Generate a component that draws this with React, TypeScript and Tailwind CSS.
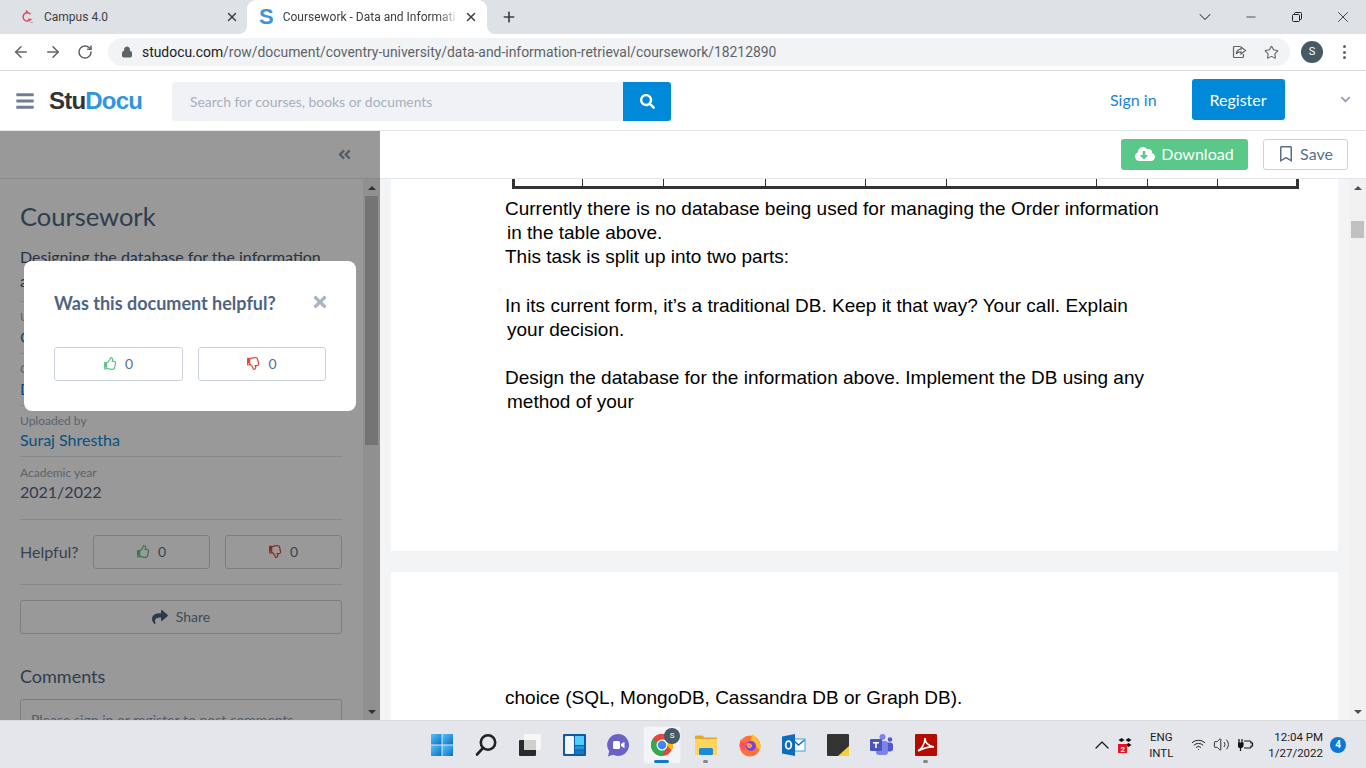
import React from "react";
import {
  FaBars, FaSearch, FaTimes, FaAngleDoubleLeft, FaChevronDown, FaCloudDownloadAlt, FaRegBookmark,
  FaRegThumbsUp, FaRegThumbsDown, FaShare,
} from "react-icons/fa";
import { ArrowLeft, ArrowRight, RotateCw, Lock, Star, X, Plus, ChevronDown, Minus, ChevronUp, Wifi, Volume2 } from "lucide-react";

const lato = "font-['Lato','Open_Sans',sans-serif]";

function Divider() {
  return <div className="h-px bg-[#dfe3e8]" />;
}

function Vote({ className, iconSize = 13 }: { className: string; iconSize?: number }) {
  return (
    <div className={`flex h-[34px] items-center justify-center gap-[8px] rounded-[3px] border border-[#ccd2da] bg-white pb-px text-[14px] text-[#5b6f88] ${className}`}>
      <FaRegThumbsUp size={iconSize} className="text-[#5ac888]" />
      <span>0</span>
    </div>
  );
}

function VoteDown({ className, iconSize = 13 }: { className: string; iconSize?: number }) {
  return (
    <div className={`flex h-[34px] items-center justify-center gap-[8px] rounded-[3px] border border-[#ccd2da] bg-white pb-px text-[14px] text-[#5b6f88] ${className}`}>
      <FaRegThumbsDown size={iconSize} className="text-[#e2493b]" />
      <span>0</span>
    </div>
  );
}

function Sidebar() {
  return (
    <aside className={`relative flex h-full w-[380px] shrink-0 flex-col bg-white ${lato}`}>
      <div className="flex h-[48px] shrink-0 items-center justify-end border-b border-[#e3e6ea] pr-[28px]">
        <FaAngleDoubleLeft size={15} className="text-[#8e9bb0]" />
      </div>
      <div className="flex min-h-0 flex-1">
        <div className="min-h-0 w-[363px] overflow-hidden pl-5 pr-[21px] pt-[21px] text-[#3f5571]">
          <div className="text-[25.5px] leading-[32px] text-[#51667f]">Coursework</div>
          <div className="mt-[13px] text-[16px] leading-[24px]">Designing the database for the information and more</div>
          <div className="mt-[8px]"><Divider /></div>
          <div className="mt-[7px] text-[12px] leading-[16px] text-[#9aa5b4]">University</div>
          <div className="mt-[2px] text-[16px] leading-[20px] text-[#0f85d4]">Coventry University</div>
          <div className="mt-[6px]"><Divider /></div>
          <div className="mt-[7px] text-[12px] leading-[16px] text-[#9aa5b4]">Course</div>
          <div className="mt-[2px] text-[16px] leading-[20px] text-[#0f85d4]">Data and Information</div>
          <div className="mt-[6px]"><Divider /></div>
          <div className="mt-[7px] text-[12px] leading-[16px] text-[#9aa5b4]">Uploaded by</div>
          <div className="text-[16px] leading-[21px] text-[#0f85d4]">Suraj Shrestha</div>
          <div className="mt-[6px]"><Divider /></div>
          <div className="mt-[8px] text-[12px] leading-[16px] text-[#9aa5b4]">Academic year</div>
          <div className="text-[16px] leading-[22px] text-[#51667f]">2021/2022</div>
          <div className="mt-[16px]"><Divider /></div>
          <div className="mt-[15px] flex items-center">
            <span className="w-[73px] text-[16px] text-[#5b6f88]">Helpful?</span>
            <Vote className="w-[117px]" />
            <VoteDown className="ml-[15px] w-[117px]" />
          </div>
          <div className="mt-[15px]"><Divider /></div>
          <div className="mt-[15px] flex h-[34px] items-center justify-center gap-[8px] rounded-[3px] border border-[#ccd2da] pb-px text-[14px] text-[#6b7d94]">
            <FaShare size={16} className="text-[#4a607c]" />
            <span>Share</span>
          </div>
          <div className="mt-[30px] text-[18px] leading-[24px] text-[#51667f]">Comments</div>
          <div className="mt-[11px] h-[60px] rounded-[3px] border border-[#ccd2da] px-[10px] pt-[11px] text-[14px] leading-[18px] text-[#8e9bb0]">
            Please sign in or register to post comments.
          </div>
        </div>
        <div className="flex w-[17px] shrink-0 flex-col items-center bg-[#f1f1f1]">
          <div className="flex h-[17px] w-full items-center justify-center"><div className="h-0 w-0 border-x-[4px] border-b-[4px] border-x-transparent border-b-[#505050]" /></div>
          <div className="h-[249px] w-[13px] bg-[#c1c1c1]" />
          <div className="flex-1" />
          <div className="flex h-[17px] w-full items-center justify-center"><div className="h-0 w-0 border-x-[4px] border-t-[4px] border-x-transparent border-t-[#505050]" /></div>
        </div>
      </div>
      <div className="absolute inset-0 bg-black/40" />
      <div className="absolute left-[24px] top-[130px] h-[150px] w-[332px] rounded-lg bg-white px-[30px] pt-[29px]">
        <div className="flex items-center justify-between">
          <span className="text-[18px] font-bold leading-[26px] text-[#4e6582]">Was this document helpful?</span>
          <FaTimes size={18} className="mb-[2px] mr-[-3px] text-[#a9b3c0]" />
        </div>
        <div className="mt-[31px] flex gap-[15px]">
          <Vote className="w-[129px]" />
          <VoteDown className="w-[128px]" />
        </div>
      </div>
    </aside>
  );
}

const lines = [
  ["ml-[0px]", "Currently there is no database being used for managing the Order information"],
  ["ml-[2px]", "in the table above."],
  ["ml-[0px]", "This task is split up into two parts:"],
  ["ml-[0px]", "\u00a0"],
  ["ml-[0px]", "In its current form, it\u2019s a traditional DB. Keep it that way? Your call. Explain"],
  ["ml-[2px]", "your decision."],
  ["ml-[0px]", "\u00a0"],
  ["ml-[0px]", "Design the database for the information above. Implement the DB using any"],
  ["ml-[2px]", "method of your"],
];

const cols = [68, 81, 102, 100, 81, 150, 51, 70, 78];

function DocArea() {
  return (
    <section className="flex min-w-0 flex-1 flex-col bg-[#f3f4f6]">
      <div className={`flex h-[48px] shrink-0 items-start justify-end gap-[15px] border-b border-[#e3e6ea] bg-white pr-[18px] pt-[8px] ${lato}`}>
        <div className="flex h-[31px] w-[127px] items-center justify-center gap-[6px] rounded-[3px] bg-[#5ac888] pb-[2px] text-[16px] text-white">
          <FaCloudDownloadAlt size={20} />
          <span>Download</span>
        </div>
        <div className="flex h-[31px] w-[85px] items-center justify-center gap-[6px] rounded-[3px] border border-[#ccd2da] pb-[2px] text-[16px] text-[#5b6f88]">
          <FaRegBookmark size={16} />
          <span>Save</span>
        </div>
      </div>
      <div className="flex min-h-0 flex-1">
        <div className="min-w-0 flex-1 overflow-hidden px-[11px]">
          <div className="h-[372px] bg-white pl-[114px]">
            <div className="ml-[7px] flex h-[10px] w-[787px] border-x-[3px] border-b-[3px] border-[#333]">
              {cols.map((w, i) => (
                <div key={i} style={{ width: w }} className="h-full shrink-0 border-r border-[#333] last:border-r-0" />
              ))}
            </div>
            <div className="mt-[8px] font-['Liberation_Sans',Arial,sans-serif] text-[19px] leading-[24.15px] text-black">
              {lines.map(([m, t], i) => (
                <div key={i} className={m}>{t}</div>
              ))}
            </div>
          </div>
          <div className="mt-[21px] h-[200px] bg-white pl-[114px] pt-[114px] font-['Liberation_Sans',Arial,sans-serif] text-[19px] leading-[24px] text-black">
            choice (SQL, MongoDB, Cassandra DB or Graph DB).
          </div>
        </div>
        <div className="flex w-[17px] shrink-0 flex-col items-center bg-[#f1f1f1]">
          <div className="flex h-[17px] w-full items-center justify-center"><div className="h-0 w-0 border-x-[4px] border-b-[4px] border-x-transparent border-b-[#505050]" /></div>
          <div className="mt-[25px] h-[17px] w-[13px] bg-[#c1c1c1]" />
          <div className="flex-1" />
          <div className="flex h-[17px] w-full items-center justify-center"><div className="h-0 w-0 border-x-[4px] border-t-[4px] border-x-transparent border-t-[#505050]" /></div>
        </div>
      </div>
    </section>
  );
}

function ChromeBars() {
  return (
    <div className="shrink-0 font-['Roboto','Open_Sans',sans-serif]">
      <div className="flex h-[34px] items-center bg-[#dee1e6] text-[12px] text-[#3c4043]">
        <div className="flex h-full w-[247px] shrink-0 items-center pl-[21px]">
          <svg width="14" height="16" viewBox="0 0 14 16" fill="none">
            <path d="M9.500 5.200A4.200 4.200 0 1 0 9.600 10.500L7 10.200" stroke="#e04a5f" strokeWidth="1.500" />
            <path d="M5 1.500 7 4" stroke="#e04a5f" strokeWidth="1.500" />
            <path d="M9 13.500h3" stroke="#9bb3c0" strokeWidth="1" />
          </svg>
          <span className="ml-[9px]">Campus 4.0</span>
          <X size={14} strokeWidth={2.5} className="ml-auto mr-[8px] text-[#3c4043]" />
        </div>
        <div className="relative flex h-full w-[240px] shrink-0 items-center rounded-t-[9px] bg-white pl-[12px]">
          <svg width="8" height="8" viewBox="0 0 8 8" className="absolute bottom-0 left-[-8px]"><path d="M8 0v8H0a8 8 0 0 0 8-8z" fill="#fff" /></svg>
          <svg width="8" height="8" viewBox="0 0 8 8" className="absolute bottom-0 right-[-8px]"><path d="M0 0v8h8a8 8 0 0 1-8-8z" fill="#fff" /></svg>
          <span className="font-['Liberation_Sans',sans-serif] text-[22px] font-bold leading-none text-[#3f92d8]">S</span>
          <span className="ml-[9px] w-[176px] overflow-hidden whitespace-nowrap [mask-image:linear-gradient(to_right,black_88%,transparent)]">Coursework - Data and Informati</span>
          <X size={14} strokeWidth={2.5} className="ml-[5px] text-[#3c4043]" />
        </div>
        <Plus size={16} strokeWidth={2.5} className="ml-[14px] text-[#3c4043]" />
        <div className="ml-auto flex items-center">
          <ChevronDown size={20} strokeWidth={1.25} className="mr-[29px]" />
          <Minus size={14} strokeWidth={1.5} className="mr-[33px]" />
          <svg width="12" height="12" viewBox="0 0 12 12" fill="none" stroke="#202124" className="mr-[31px]">
            <rect x="1.500" y="3.500" width="7" height="7" rx="1" />
            <path d="M3.500 3.500V2.500a1 1 0 0 1 1-1h5a1 1 0 0 1 1 1v5a1 1 0 0 1-1 1h-1" />
          </svg>
          <X size={18} strokeWidth={1.25} className="mr-[14px]" />
        </div>
      </div>
      <div className="flex h-[37px] items-center border-b border-[#dadce0] bg-white">
        <ArrowLeft size={18} strokeWidth={2} className="ml-[12px] text-[#5f6368]" />
        <ArrowRight size={18} strokeWidth={2} className="ml-[14px] text-[#5f6368]" />
        <RotateCw size={16} strokeWidth={2.25} className="ml-[15px] text-[#5f6368]" />
        <div className="ml-[15px] flex h-[28px] w-[1182px] items-center rounded-full bg-[#f1f3f4] pl-[13px] pr-[11px] text-[13.9px] text-[#5f6368]">
          <Lock size={12} fill="#5f6368" strokeWidth={2} />
          <span className="ml-[9px] whitespace-nowrap"><span className="text-[#202124]">studocu.com</span>/row/document/coventry-university/data-and-information-retrieval/coursework/18212890</span>
          <svg width="15" height="14" viewBox="0 0 15 14" fill="none" stroke="#5f6368" strokeWidth="1.200" className="ml-auto">
            <path d="M8 1.500H2.500a1 1 0 0 0-1 1v9a1 1 0 0 0 1 1h8a1 1 0 0 0 1-1V9" />
            <path d="M9 2v2.200C6 4.400 4.600 6 4.200 9c1-1.500 2.600-2.200 4.800-2.200V9l4.500-3.500L9 2z" />
          </svg>
          <Star size={15} strokeWidth={1.75} className="ml-[17px] text-[#5f6368]" />
        </div>
        <div className="ml-[11px] flex h-[22px] w-[22px] items-center justify-center rounded-full bg-[#455a64] text-[11px] text-white">S</div>
        <div className="ml-[20px] flex flex-col gap-[2.5px]">
          <div className="h-[3px] w-[3px] rounded-full bg-[#5f6368]" />
          <div className="h-[3px] w-[3px] rounded-full bg-[#5f6368]" />
          <div className="h-[3px] w-[3px] rounded-full bg-[#5f6368]" />
        </div>
      </div>
    </div>
  );
}

function SiteHeader() {
  return (
    <header className={`flex h-[60px] shrink-0 items-center border-b border-[#e3e6ea] bg-white ${lato}`}>
      <FaBars size={20} className="ml-[15px] text-[#6e7f95]" />
      <div className="ml-[14px] w-[123px] font-['Liberation_Sans',sans-serif] text-[24px] font-bold tracking-[-0.8px] text-[#333]">
        Stu<span className="text-[#2f96dc]">Docu</span>
      </div>
      <div className="mt-[2px] flex h-[39px] w-[451px] items-center rounded-l-[3px] bg-[#f0f2f5] pl-[18px] pt-[2px] text-[13.9px] text-[#a6b0bf]">
        Search for courses, books or documents
      </div>
      <div className="mt-[2px] flex h-[39px] w-[48px] items-center justify-center rounded-r-[3px] bg-[#0089d9] text-white">
        <FaSearch size={15} />
      </div>
      <span className="mb-[2px] ml-[439px] text-[16px] text-[#1a84d8]">Sign in</span>
      <div className="mb-[2px] ml-[35px] flex h-[41px] w-[93px] items-center justify-center rounded-[3px] bg-[#0089d9] text-[16px] text-white">Register</div>
      <FaChevronDown size={11} className="mb-[2px] ml-[55px] text-[#8fa0b5]" />
    </header>
  );
}

function Win() {
  return (
    <svg width="24" height="24" viewBox="0 0 24 24">
      <defs>
        <linearGradient id="wg" x1="0" y1="0" x2="1" y2="1"><stop offset="0" stopColor="#52c4f5" /><stop offset="1" stopColor="#0b6fc9" /></linearGradient>
      </defs>
      <rect x="1" y="1" width="10.500" height="10.500" fill="url(#wg)" />
      <rect x="12.500" y="1" width="10.500" height="10.500" fill="url(#wg)" />
      <rect x="1" y="12.500" width="10.500" height="10.500" fill="url(#wg)" />
      <rect x="12.500" y="12.500" width="10.500" height="10.500" fill="url(#wg)" />
    </svg>
  );
}

const taskIcons: React.ReactNode[] = [
  <Win key="win" />,
  <svg key="s" width="24" height="24" viewBox="0 0 24 24" fill="none" stroke="#222" strokeWidth="2.600"><circle cx="14" cy="9.500" r="7.200" /><path d="M9 15l-6 6.500" strokeLinecap="round" /></svg>,
  <svg key="tv" width="24" height="24" viewBox="0 0 24 24"><rect x="6" y="1" width="17" height="16" rx="1" fill="#f7f7f7" /><rect x="1" y="7" width="17" height="16" rx="1" fill="#2a2a2a" /><rect x="6" y="7" width="12" height="10" fill="#cfcfcf" /></svg>,
  <svg key="wd" width="24" height="24" viewBox="0 0 24 24"><rect x="1" y="1" width="23" height="22" rx="1" fill="#0f5aa0" /><rect x="3" y="3" width="9" height="18" rx="1" fill="#f3f5f8" /><rect x="13" y="3" width="9" height="9" fill="#4fd0f7" /><rect x="13" y="13" width="9" height="3.500" fill="#1c94e0" /><rect x="13" y="17.500" width="9" height="3.500" fill="#1578c8" /></svg>,
  <svg key="ch" width="24" height="24" viewBox="0 0 24 24"><path d="M12 1a11 11 0 1 1-5 20.800L2 23.500l1.200-5.200A11 11 0 0 1 12 1z" fill="#6a62c4" /><rect x="7" y="8" width="7" height="8" rx="1.500" fill="#fff" /><path d="M15 11l3.500-2.300v6.600L15 13z" fill="#fff" /></svg>,
  <svg key="cr" width="24" height="24" viewBox="0 0 24 24"><circle cx="12" cy="12" r="11" fill="#e8453c" /><path d="M12 12 2.500 6.500A11 11 0 0 0 12 23l5-9z" fill="#34a853" /><path d="M12 1a11 11 0 0 1 9.500 16.500L16 11H12z" fill="#fbbc05" /><path d="M2.500 6.500A11 11 0 0 1 12 1a11 11 0 0 1 9.500 5.500H12z" fill="#e8453c" /><circle cx="12" cy="12" r="5.500" fill="#fff" /><circle cx="12" cy="12" r="4.300" fill="#4285f4" /></svg>,
  <svg key="fo" width="24" height="24" viewBox="0 0 24 24"><path d="M1 3.500a1 1 0 0 1 1-1h6.500l2 2H22a1 1 0 0 1 1 1V22H1z" fill="#e0a92a" /><rect x="1" y="6" width="22" height="16" fill="#fcd55f" /><rect x="5" y="15" width="14" height="7" rx="1.500" fill="#1c8ad8" /></svg>,
  <svg key="ff" width="24" height="24" viewBox="0 0 24 24"><circle cx="12" cy="13" r="10.500" fill="#ff7139" /><path d="M14 1c4 3 8.500 7 8.500 12 0 2-.5 3-1 4L13 8z" fill="#ffbd2e" /><path d="M2.500 6c1 5 4 4 7.500 3l-4 9-4.500-5z" fill="#ff4f5e" /><circle cx="13" cy="13" r="5" fill="#7542e5" /><path d="M8 11c2-2 5-1 6 1s-2 4-4 3z" fill="#ff9640" /></svg>,
  <svg key="ol" width="24" height="24" viewBox="0 0 24 24"><rect x="10" y="6" width="13" height="12" fill="#fff" stroke="#3da0e2" /><path d="M11 7l5.500 5L22.500 7" fill="none" stroke="#0f6cbd" strokeWidth="1.400" /><path d="M0 3.500 13 1v22L0 20.500z" fill="#0f6cbd" /><ellipse cx="6.500" cy="12" rx="2.800" ry="3.800" fill="none" stroke="#fff" strokeWidth="1.800" /></svg>,
  <svg key="st" width="24" height="24" viewBox="0 0 24 24"><rect x="1" y="1" width="22" height="22" rx="1" fill="#333" /><path d="M12 23l11-10v10z" fill="#f7d038" /></svg>,
  <svg key="te" width="24" height="24" viewBox="0 0 24 24"><circle cx="12.500" cy="4" r="3" fill="#7b83eb" /><circle cx="20" cy="6.500" r="2.300" fill="#5059c9" /><rect x="15" y="9.500" width="8" height="9" rx="3" fill="#5059c9" /><rect x="6" y="8" width="12" height="14" rx="3" fill="#7b83eb" /><rect x="0" y="6" width="12" height="12" rx="1" fill="#4b53bc" /><path d="M3 9h6v1.600H6.800V15H5.200v-4.400H3z" fill="#fff" /></svg>,
  <svg key="ad" width="24" height="24" viewBox="0 0 24 24"><rect x="1" y="1" width="22" height="22" rx="1" fill="#b30b00" /><path d="M4 18c4-2 7-8 7-13 0 5 4 8 9 9-5-.5-10 1-16 4z" fill="none" stroke="#fff" strokeWidth="1.600" /></svg>,
];

function Taskbar() {
  return (
    <footer className="relative flex h-[48px] shrink-0 items-center border-t border-[#d8dade] bg-[#e4e6ec] font-['Roboto','Open_Sans',sans-serif] text-[#1b1b1b]">
      <div className="flex pl-[420px]">
        {taskIcons.map((icon, i) => (
          <div key={i} className="relative flex h-[38px] w-[44px] items-center justify-center">
            {i === 5 && <div className="absolute inset-y-0 inset-x-[3px] rounded-[3px] border border-[#eaebef] bg-[#f3f4f7]" />}
            <div className="relative flex">{icon}</div>
            {i === 5 && <div className="absolute right-[4px] top-[2px] flex h-[16px] w-[16px] items-center justify-center rounded-full bg-[#455a64] text-[8px] text-white">S</div>}
            {i === 5 && <div className="absolute bottom-[1px] left-[14px] h-[3px] w-[15px] rounded bg-[#0a78d4]" />}
            {(i === 6 || i === 11) && <div className="absolute bottom-[1px] left-[19px] h-[3px] w-[5px] rounded bg-[#858585]" />}
          </div>
        ))}
      </div>
      <div className="ml-auto flex items-center">
        <ChevronUp size={24} strokeWidth={1.25} />
        <svg width="16" height="16" viewBox="0 0 16 16" className="ml-[4px]">
          <path d="M3.500 1l3 2-3 2-3-2zM10.500 1l3 2-3 2-3-2zM10.500 6l3 2-3 2-3-2z" fill="#111" />
          <rect x="0" y="7" width="9" height="9" fill="#e81123" />
          <text x="2.500" y="14.500" fontSize="8" fontWeight="700" fill="#fff" fontFamily="Roboto">2</text>
        </svg>
        <div className="ml-[8px] flex w-[38px] flex-col items-center text-[11.5px] leading-[16px]">
          <span>ENG</span>
          <span>INTL</span>
        </div>
        <Wifi size={15} strokeWidth={1.5} className="ml-[11px]" />
        <Volume2 size={17} strokeWidth={1.25} className="ml-[7px]" />
        <svg width="16" height="14" viewBox="0 0 16 14" fill="none" stroke="#111" strokeWidth="1.200" className="ml-[8px]">
          <path d="M6 3h6a1 1 0 0 1 1 1v1h1.500v3H13v1a1 1 0 0 1-1 1H6" />
          <path d="M1 1v4M4 1v4M0 5h5v2a2.500 2.500 0 0 1-5 0zM2.500 9v4" fill="#111" />
        </svg>
        <div className="ml-[14px] flex flex-col items-end text-[11.5px] leading-[16px]">
          <span>12:04 PM</span>
          <span>1/27/2022</span>
        </div>
        <div className="ml-[7px] mr-[20px] flex h-[16px] w-[16px] items-center justify-center rounded-full bg-[#0a78d4] text-[10px] font-bold text-white">4</div>
      </div>
    </footer>
  );
}

export default function App() {
  return (
    <div className="flex h-[768px] w-[1366px] flex-col overflow-hidden bg-white">
      <ChromeBars />
      <SiteHeader />
      <main className="flex min-h-0 flex-1">
        <Sidebar />
        <DocArea />
      </main>
      <Taskbar />
    </div>
  );
}
